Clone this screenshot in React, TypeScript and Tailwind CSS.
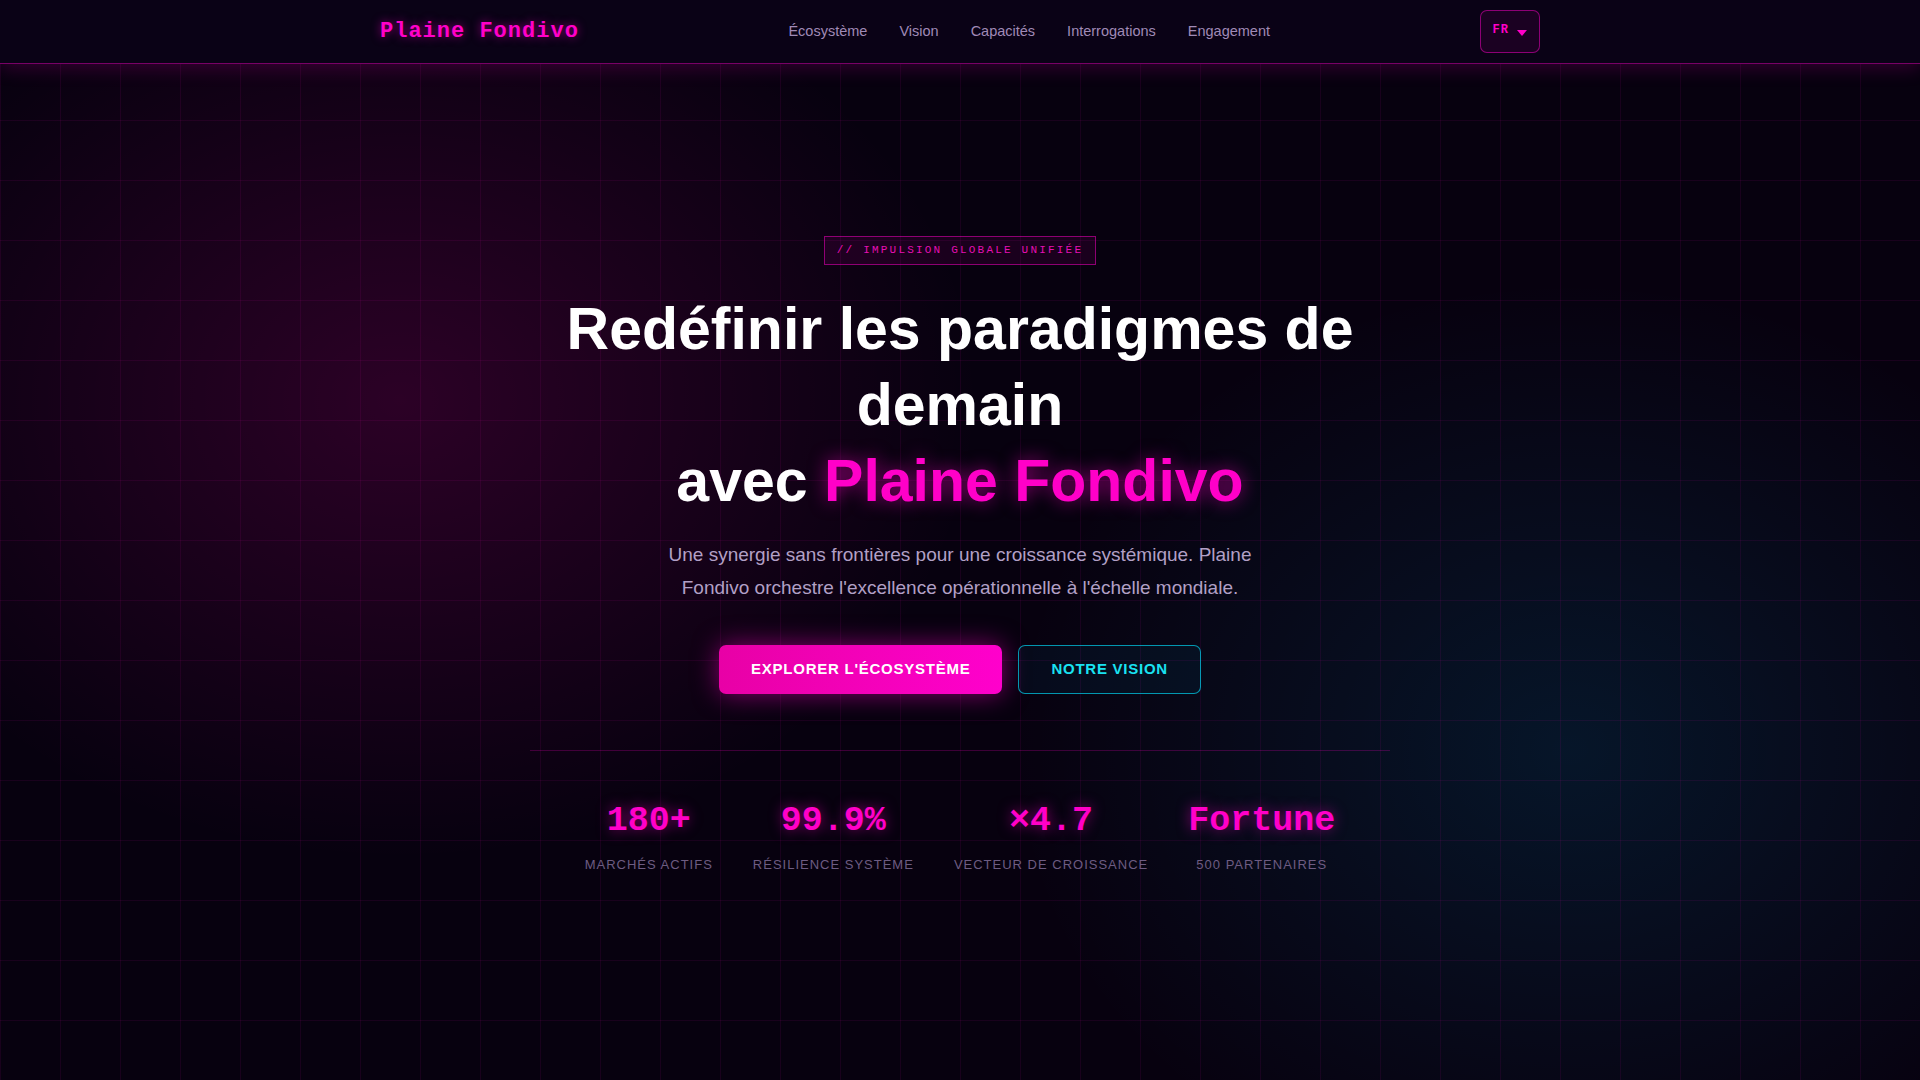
import React from 'react';

const navLinks = ['Écosystème', 'Vision', 'Capacités', 'Interrogations', 'Engagement'];

const stats = [
  { value: '180+', label: 'Marchés actifs' },
  { value: '99.9%', label: 'Résilience système' },
  { value: '×4.7', label: 'Vecteur de croissance' },
  { value: 'Fortune', label: '500 partenaires' },
];

const sans = "font-['Liberation_Sans',Arial,sans-serif]";
const mono = "font-['Liberation_Mono','Courier_New',monospace]";

const Header: React.FC = () => (
  <header className="h-[64px] bg-[#0a0216] border-b border-[rgba(255,0,200,0.45)] shadow-[0_4px_18px_rgba(255,0,200,0.18)] relative z-10">
    <div className="max-w-[1200px] mx-auto px-5 h-full flex items-center justify-between">
      <a
        className={`${mono} text-[22px] font-bold tracking-[1px] text-[#ff00c8] [text-shadow:0_0_10px_rgba(255,0,200,0.55)] leading-none`}
      >
        Plaine Fondivo
      </a>
      <nav className={`${sans} flex items-center gap-8 text-[14.5px] text-[#a08ab6]`}>
        {navLinks.map((link) => (
          <a key={link} className="hover:text-white">
            {link}
          </a>
        ))}
      </nav>
      <button
        className={`${mono} h-[43px] px-[12px] flex items-center gap-[8px] rounded-[7px] border border-[rgba(255,0,200,0.5)] bg-[rgba(255,0,200,0.07)] text-[#ff00c8] text-[12px] font-bold tracking-[1px]`}
      >
        <span className="-mt-[3px]">FR</span>
        <svg width="10" height="6" viewBox="0 0 10 6" className="mt-[2px]">
          <path d="M0 0 L10 0 L5 6 Z" fill="#ff00c8" />
        </svg>
      </button>
    </div>
  </header>
);

const App: React.FC = () => {
  return (
    <div
      className={`${sans} min-h-screen bg-[#07010f] [background-image:linear-gradient(rgba(255,0,200,0.075)_1px,transparent_1px),linear-gradient(90deg,rgba(255,0,200,0.075)_1px,transparent_1px),radial-gradient(ellipse_580px_460px_at_400px_400px,rgba(255,0,170,0.15),transparent),radial-gradient(ellipse_560px_470px_at_1570px_750px,rgba(0,190,255,0.11),transparent)] [background-size:60px_60px,60px_60px,100%_100%,100%_100%]`}
    >
      <Header />

      <main className="flex flex-col items-center pt-[172px] pb-[210px] text-center">
        <span
          className={`${mono} inline-block px-3 py-[7px] leading-[13px] text-[11px] tracking-[2.2px] text-[#e60fb4] border border-[rgba(255,0,200,0.5)] bg-[rgba(255,0,200,0.08)]`}
        >
          // IMPULSION GLOBALE UNIFIÉE
        </span>

        <h1 className="mt-[26px] max-w-[900px] text-[59px] leading-[76px] font-bold text-white">
          Redéfinir les paradigmes de demain
          <br />
          avec{' '}
          <span className="text-[#ff00c8] [text-shadow:0_0_18px_rgba(255,0,200,0.55)]">
            Plaine Fondivo
          </span>
        </h1>

        <p className="mt-[19px] max-w-[620px] text-[19px] leading-[33px] text-[#b2a0c6]">
          Une synergie sans frontières pour une croissance systémique. Plaine Fondivo orchestre
          l'excellence opérationnelle à l'échelle mondiale.
        </p>

        <div className="mt-[41px] flex items-center gap-4">
          <button className="h-[49px] px-8 rounded-[7px] bg-gradient-to-r from-[#e800a6] to-[#ff00cc] text-white text-[15px] font-bold tracking-[0.75px] shadow-[0_0_26px_rgba(255,0,200,0.5)]">
            EXPLORER L'ÉCOSYSTÈME
          </button>
          <button className="h-[49px] px-8 rounded-[7px] border border-[rgba(0,210,240,0.7)] bg-[rgba(0,200,255,0.05)] text-[#19e2f2] text-[15px] font-bold tracking-[0.75px]">
            NOTRE VISION
          </button>
        </div>

        <div className="mt-[56px] w-[860px] border-t border-[rgba(255,0,200,0.22)] pt-[50px] flex justify-center gap-10">
          {stats.map((s) => (
            <div key={s.label} className="flex flex-col items-center">
              <span
                className={`${mono} text-[35px] leading-[40px] font-bold text-[#ff00c8] [text-shadow:0_0_14px_rgba(255,0,200,0.55)]`}
              >
                {s.value}
              </span>
              <span className="mt-[16px] text-[13px] leading-[15px] uppercase tracking-[1px] text-[#6d5c82]">
                {s.label}
              </span>
            </div>
          ))}
        </div>
      </main>
    </div>
  );
};

export default App;
